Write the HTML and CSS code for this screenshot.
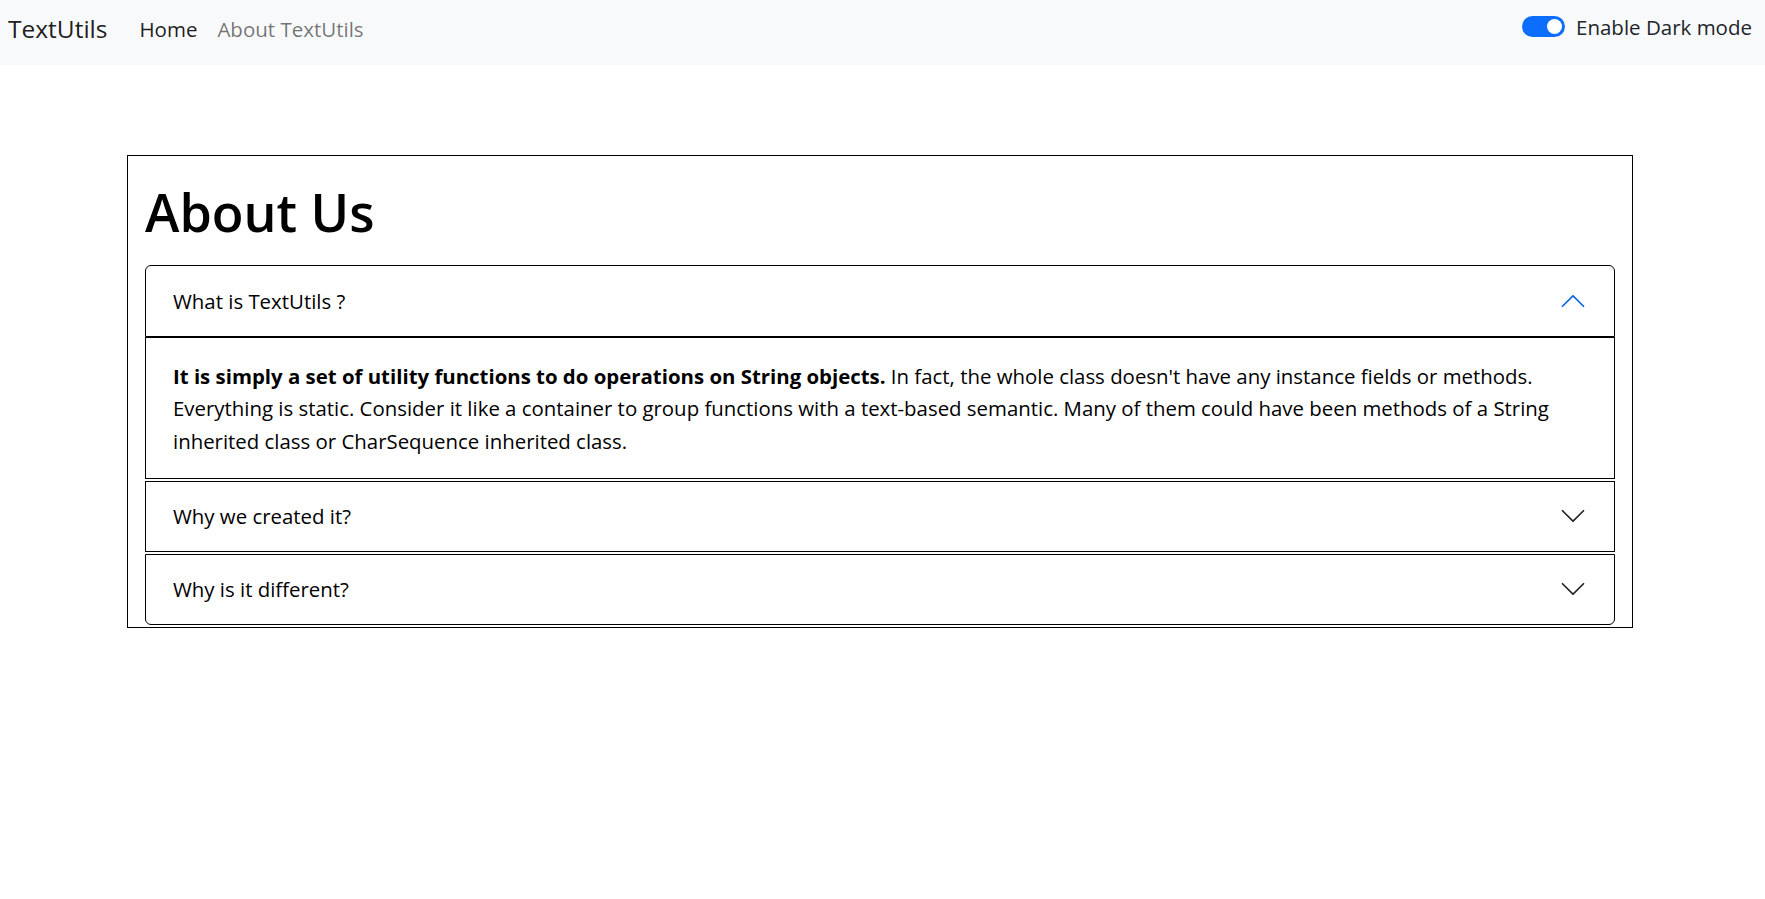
FILE: index.html
```html
<!DOCTYPE html>
<html lang="en">
<head>
<meta charset="utf-8">
<title>TextUtils - About</title>
<link rel="stylesheet" href="styles.css">
</head>
<body>
<nav class="navbar">
  <div class="nav-left">
    <a class="brand" href="#">TextUtils</a>
    <ul class="nav-links">
      <li><a class="nav-link active" href="#">Home</a></li>
      <li><a class="nav-link" href="#">About TextUtils</a></li>
    </ul>
  </div>
  <div class="switch-wrap">
    <span class="switch"><span class="knob"></span></span>
    <label class="switch-label">Enable Dark mode</label>
  </div>
</nav>

<main class="container">
  <h1 class="title">About Us</h1>
  <div class="accordion">
    <div class="acc-item acc-first">
      <div class="acc-head">
        <span>What is TextUtils ?</span>
        <svg class="chev chev-up" viewBox="0 0 16 16"><path fill="#0c63e4" d="M1.646 4.646a.5.5 0 0 1 .708 0L8 10.293l5.646-5.647a.5.5 0 0 1 .708.708l-6 6a.5.5 0 0 1-.708 0l-6-6a.5.5 0 0 1 0-.708z"/></svg>
      </div>
      <div class="acc-body">
        <p class="acc-text"><strong>It is simply a set of utility functions to do operations on String objects.</strong> In fact, the whole class doesn't have any instance fields or methods. Everything is static. Consider it like a container to group functions with a text-based semantic. Many of them could have been methods of a String inherited class or CharSequence inherited class.</p>
      </div>
    </div>
    <div class="acc-item">
      <div class="acc-head">
        <span>Why we created it?</span>
        <svg class="chev" viewBox="0 0 16 16"><path fill="#212529" d="M1.646 4.646a.5.5 0 0 1 .708 0L8 10.293l5.646-5.647a.5.5 0 0 1 .708.708l-6 6a.5.5 0 0 1-.708 0l-6-6a.5.5 0 0 1 0-.708z"/></svg>
      </div>
    </div>
    <div class="acc-item acc-last">
      <div class="acc-head">
        <span>Why is it different?</span>
        <svg class="chev" viewBox="0 0 16 16"><path fill="#212529" d="M1.646 4.646a.5.5 0 0 1 .708 0L8 10.293l5.646-5.647a.5.5 0 0 1 .708.708l-6 6a.5.5 0 0 1-.708 0l-6-6a.5.5 0 0 1 0-.708z"/></svg>
      </div>
    </div>
  </div>
</main>
</body>
</html>
```
FILE: styles.css
```css
* { box-sizing: border-box; }

body {
  margin: 0;
  font-family: "Open Sans", "Noto Sans", sans-serif;
  color: #000;
  background: #fff;
}

.navbar {
  display: flex;
  justify-content: space-between;
  align-items: center;
  height: 65px;
  padding: 0 13px 7px 8px;
  background: #f8f9fa;
}

.nav-left {
  display: flex;
  align-items: center;
}

.brand {
  font-size: 24.5px;
  color: rgba(0, 0, 0, 0.9);
  text-decoration: none;
  margin-right: 32px;
  margin-bottom: 2px;
}

.nav-links {
  display: flex;
  gap: 20px;
  list-style: none;
  margin: 0;
  padding: 0;
}

.nav-link {
  font-size: 20.5px;
  color: rgba(0, 0, 0, 0.55);
  text-decoration: none;
}

.nav-link.active {
  color: rgba(0, 0, 0, 0.9);
}

.switch-wrap {
  display: flex;
  align-items: center;
  gap: 11px;
  margin-bottom: 5px;
}

.switch {
  width: 43px;
  height: 21px;
  border-radius: 11px;
  background: #0d6efd;
  display: flex;
  align-items: center;
  justify-content: flex-end;
  padding-right: 3px;
}

.knob {
  width: 15px;
  height: 15px;
  border-radius: 50%;
  background: #fff;
}

.switch-label {
  font-size: 20.5px;
  color: #212529;
}

.container {
  width: 1506px;
  margin: 90px 0 0 127px;
  border: 1px solid #000;
  padding: 0 17px 2px;
}

.title {
  font-size: 52px;
  font-weight: 600;
  line-height: 1.2;
  margin: 24.5px 0 22px;
  color: #000;
}

.acc-item + .acc-item {
  margin-top: 2px;
}

.acc-head {
  display: flex;
  align-items: center;
  justify-content: space-between;
  height: 71px;
  padding: 0 27px;
  border: 1px solid #000;
  font-size: 20.4px;
  color: #000;
}

.acc-first .acc-head {
  height: 72px;
  border-radius: 6px 6px 0 0;
}

.acc-last .acc-head {
  border-radius: 0 0 6px 6px;
}

.acc-body {
  border: 1px solid #000;
  padding: 22px 27px 20px;
}

.acc-text {
  margin: 0;
  font-size: 20.4px;
  line-height: 32.6px;
  color: #000;
}

.chev {
  width: 28px;
  height: 28px;
  display: block;
}

.chev-up {
  transform: rotate(180deg);
}
```
